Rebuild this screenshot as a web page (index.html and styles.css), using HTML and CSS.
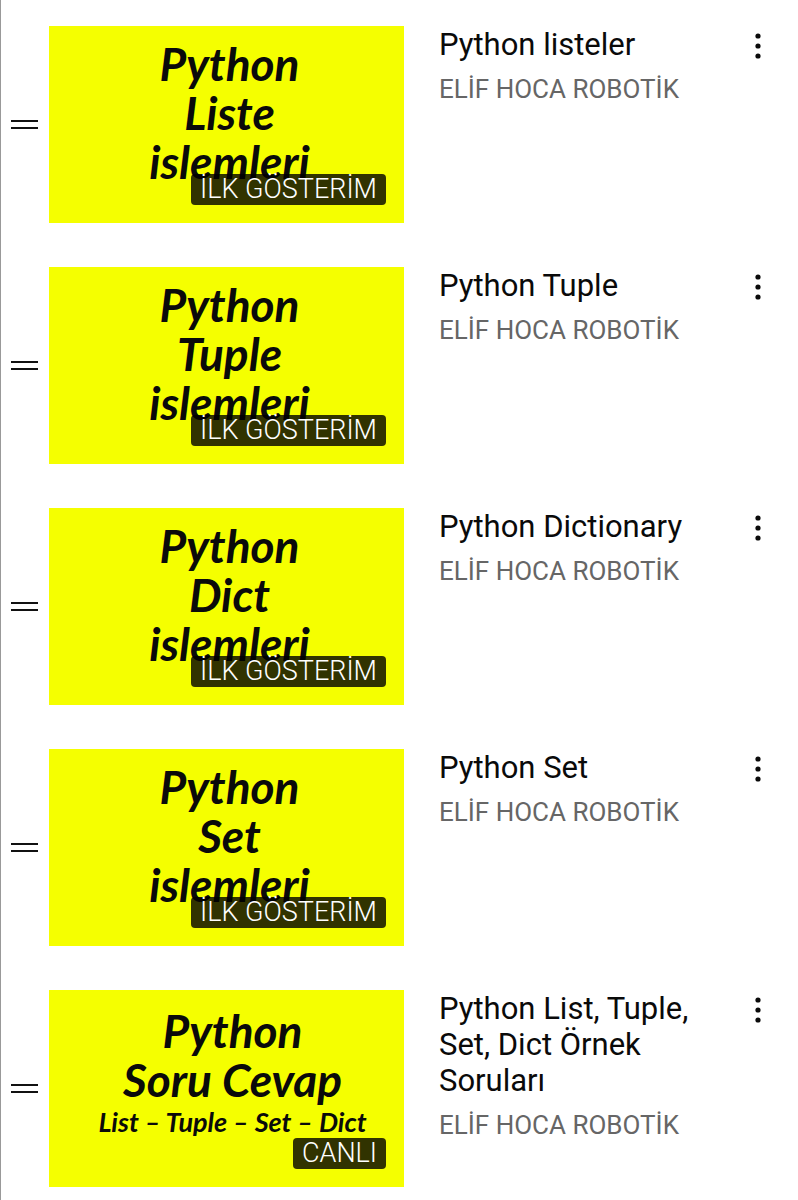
FILE: index.html
```html
<!DOCTYPE html>
<html lang="tr">
<head>
    <meta charset="UTF-8" />
    <meta name="viewport" content="width=device-width, initial-scale=1" />
    <title>Python Oynatma Listesi</title>
    <link rel="stylesheet" href="styles.css">
</head>
<body>
<ul class="playlist">
    <li class="video">
        <button class="handle" aria-label="Sırala"></button>
        <a class="thumb" href="#">
            <span class="cover">Python<br>Liste<br>islemleri</span>
            <span class="badge">İLK GÖSTERİM</span>
        </a>
        <div class="info">
            <h3>Python listeler</h3>
            <p>ELİF HOCA ROBOTİK</p>
        </div>
        <button class="menu" aria-label="Menü">
            <svg width="30" height="30" viewBox="0 0 30 30"><circle cx="15" cy="5" r="2.6"/><circle cx="15" cy="15" r="2.6"/><circle cx="15" cy="25" r="2.6"/></svg>
        </button>
    </li>
    <li class="video">
        <button class="handle" aria-label="Sırala"></button>
        <a class="thumb" href="#">
            <span class="cover">Python<br>Tuple<br>islemleri</span>
            <span class="badge">İLK GÖSTERİM</span>
        </a>
        <div class="info">
            <h3>Python Tuple</h3>
            <p>ELİF HOCA ROBOTİK</p>
        </div>
        <button class="menu" aria-label="Menü">
            <svg width="30" height="30" viewBox="0 0 30 30"><circle cx="15" cy="5" r="2.6"/><circle cx="15" cy="15" r="2.6"/><circle cx="15" cy="25" r="2.6"/></svg>
        </button>
    </li>
    <li class="video">
        <button class="handle" aria-label="Sırala"></button>
        <a class="thumb" href="#">
            <span class="cover">Python<br>Dict<br>islemleri</span>
            <span class="badge">İLK GÖSTERİM</span>
        </a>
        <div class="info">
            <h3>Python Dictionary</h3>
            <p>ELİF HOCA ROBOTİK</p>
        </div>
        <button class="menu" aria-label="Menü">
            <svg width="30" height="30" viewBox="0 0 30 30"><circle cx="15" cy="5" r="2.6"/><circle cx="15" cy="15" r="2.6"/><circle cx="15" cy="25" r="2.6"/></svg>
        </button>
    </li>
    <li class="video">
        <button class="handle" aria-label="Sırala"></button>
        <a class="thumb" href="#">
            <span class="cover">Python<br>Set<br>islemleri</span>
            <span class="badge">İLK GÖSTERİM</span>
        </a>
        <div class="info">
            <h3>Python Set</h3>
            <p>ELİF HOCA ROBOTİK</p>
        </div>
        <button class="menu" aria-label="Menü">
            <svg width="30" height="30" viewBox="0 0 30 30"><circle cx="15" cy="5" r="2.6"/><circle cx="15" cy="15" r="2.6"/><circle cx="15" cy="25" r="2.6"/></svg>
        </button>
    </li>
    <li class="video">
        <button class="handle" aria-label="Sırala"></button>
        <a class="thumb" href="#">
            <span class="cover cover-live">Python<br>Soru Cevap<small>List – Tuple – Set – Dict</small></span>
            <span class="badge">CANLI</span>
        </a>
        <div class="info">
            <h3>Python List, Tuple, Set, Dict Örnek Soruları</h3>
            <p>ELİF HOCA ROBOTİK</p>
        </div>
        <button class="menu" aria-label="Menü">
            <svg width="30" height="30" viewBox="0 0 30 30"><circle cx="15" cy="5" r="2.6"/><circle cx="15" cy="15" r="2.6"/><circle cx="15" cy="25" r="2.6"/></svg>
        </button>
    </li>
</ul>
</body>
</html>
```

FILE: styles.css
```css
* {
  box-sizing: border-box;
}
body {
  margin: 0;
  background: #fff;
  font-family: Roboto, sans-serif;
  color: #0a0a0a;
}
.playlist {
  display: flex;
  flex-direction: column;
  gap: 44px;
  margin: 0;
  padding: 26px 25px 13px 10px;
  border-left: 1px solid #999;
  list-style: none;
}
.video {
  display: grid;
  grid-template-columns: 27px 366fr 339fr 30px;
  align-items: start;
}
button {
  padding: 0;
  border: none;
  background: none;
}
.handle {
  align-self: center;
  height: 9px;
  border-top: 2px solid #111;
  border-bottom: 2px solid #111;
}
.thumb {
  position: relative;
  display: block;
  margin-left: 11px;
  aspect-ratio: 355 / 197;
  background: #f5ff00;
  color: #0a0a0a;
  text-decoration: none;
  overflow: hidden;
}
.cover {
  display: block;
  padding: 13px 0 0 6px;
  font-family: Lato, sans-serif;
  font-size: 46px;
  font-style: italic;
  font-weight: 700;
  line-height: 49px;
  text-align: center;
}
.cover-live {
  padding: 16px 0 0 12px;
}
.cover small {
  display: block;
  font-size: 27px;
  line-height: 36px;
}
.badge {
  position: absolute;
  right: 18px;
  bottom: 18px;
  padding: 0 9px;
  border-radius: 4px;
  background: rgba(0, 0, 0, 0.8);
  color: #fff;
  font-size: 27px;
  font-weight: 300;
  line-height: 31px;
}
.info {
  padding: 1px 0 0 35px;
}
h3 {
  max-width: 290px;
  margin: 0;
  font-size: 31px;
  font-weight: 400;
  line-height: 36px;
}
p {
  margin: 10px 0 0;
  font-size: 26px;
  line-height: 32px;
  color: #666;
  white-space: nowrap;
}
.menu {
  height: 40px;
}
.menu svg {
  display: block;
  fill: #0a0a0a;
}
```
